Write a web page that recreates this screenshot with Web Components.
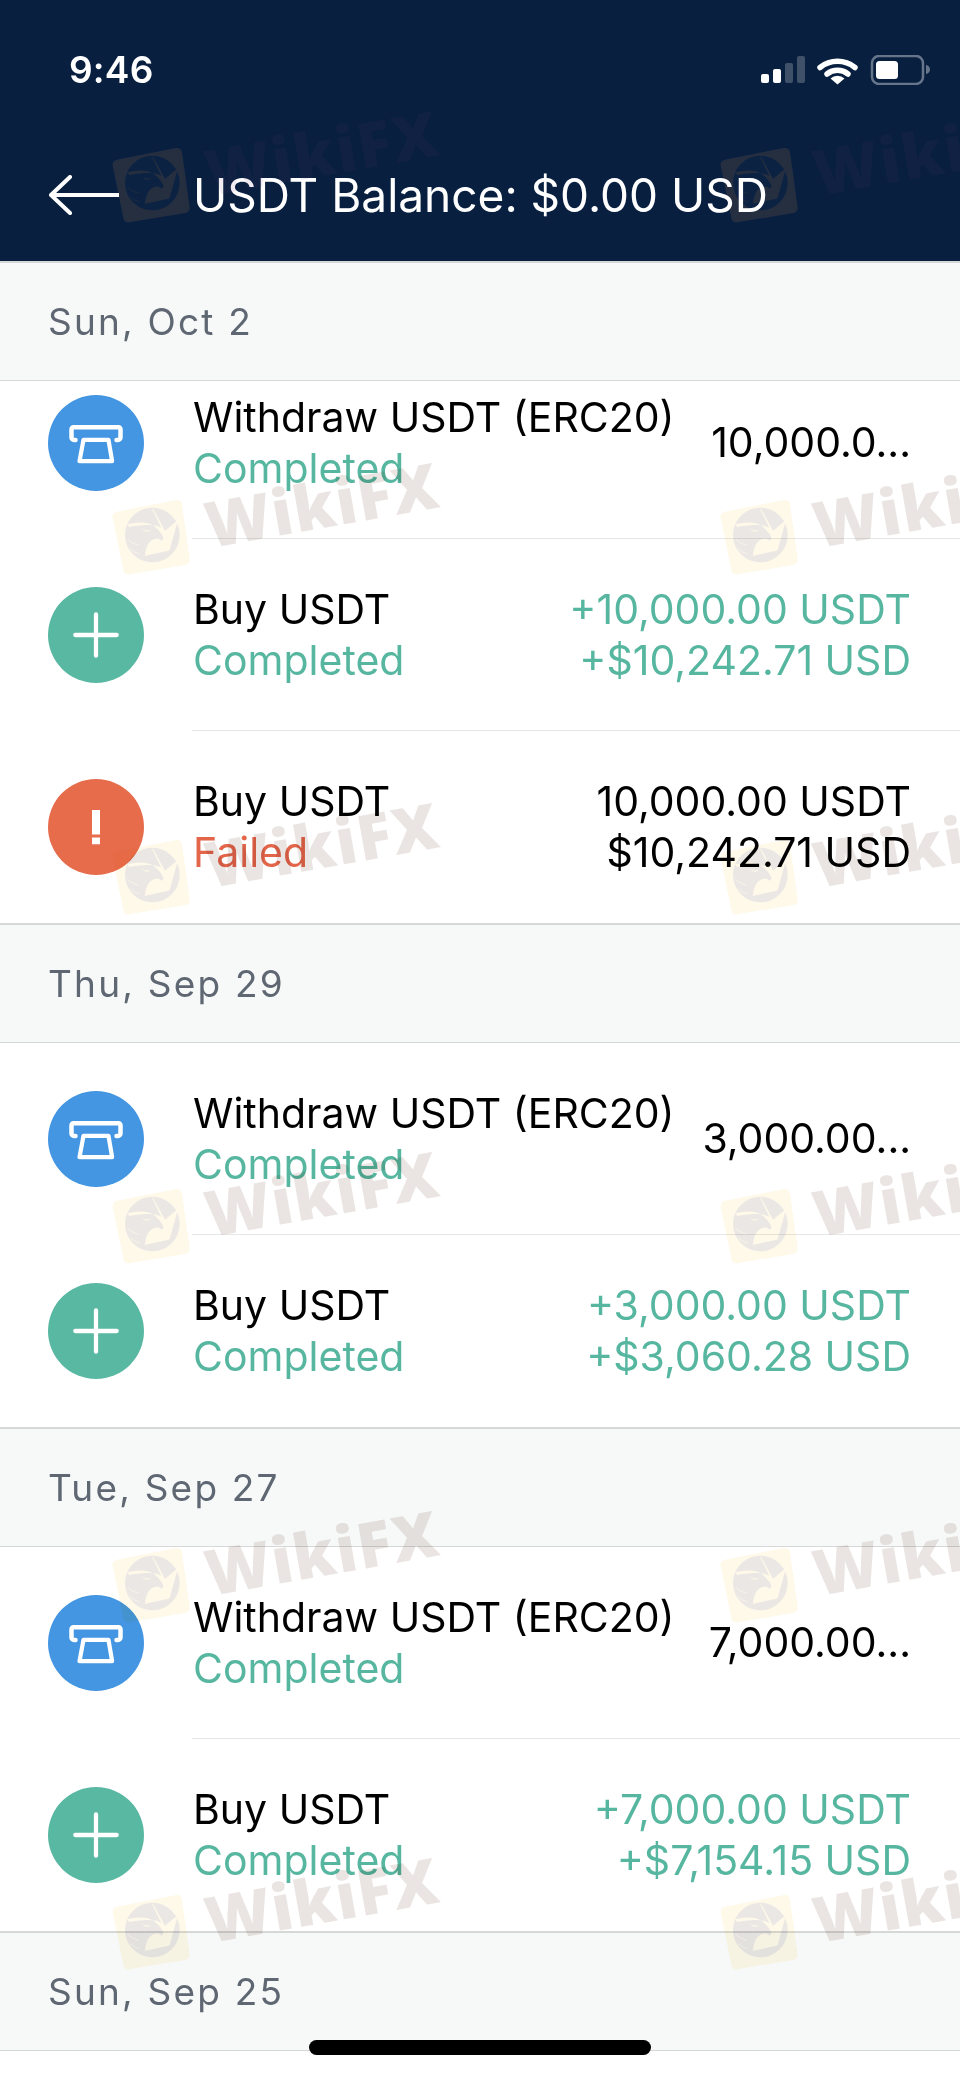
<!DOCTYPE html>
<html><head><meta charset="utf-8"><style>
html,body{margin:0;padding:0;background:#fff}
body{width:960px;height:2079px;overflow:hidden;font-family:Inter,"Liberation Sans",sans-serif}
</style></head><body>
<tx-app></tx-app>
<script>
const CIRCLE={
 withdraw:`<svg viewBox="0 0 96 96" width="96" height="96"><circle cx="48" cy="48" r="48" fill="#4496e2"/><path d="M27.500 45h-1.500a2.500 2.500 0 0 1-2.500-2.500V34.200a2 2 0 0 1 2-2h45a2 2 0 0 1 2 2v8.300a2.500 2.500 0 0 1-2.500 2.500h-1.500" fill="none" stroke="#fff" stroke-width="4.500" stroke-linecap="round" stroke-linejoin="round"/><path d="M35.500 44.800h25l3.600 21.400H31.500z" fill="none" stroke="#fff" stroke-width="4.200" stroke-linejoin="round"/></svg>`,
 plus:`<svg viewBox="0 0 96 96" width="96" height="96"><circle cx="48" cy="48" r="48" fill="#58b8a2"/><path d="M48 27.300v41.400M27.300 48h41.400" stroke="#fff" stroke-width="4.300" stroke-linecap="round"/></svg>`,
 fail:`<svg viewBox="0 0 96 96" width="96" height="96"><circle cx="48" cy="48" r="48" fill="#e66c4b"/><path d="M44 31h8v24.500h-8zM44 58.500h8v6.800h-8z" fill="#fff"/></svg>`
};
customElements.define('status-bar',class extends HTMLElement{constructor(){super();this.attachShadow({mode:'open'}).innerHTML=`<style>
:host{display:flex;justify-content:space-between;align-items:center;height:60px;padding:40px 29px 0 69px;color:#fff}
.t{font:600 37px/60px Inter,sans-serif;letter-spacing:.2px}
svg{display:block}
</style><span class="t">9:46</span>
<svg width="170" height="30" viewBox="762 55 170 30" fill="#fff">
<rect x="762" y="74" width="8" height="9" rx="2"/><rect x="774" y="69" width="8" height="14" rx="2"/>
<rect x="786" y="63" width="8" height="20" rx="2" fill="#3f5069"/><rect x="798" y="56" width="8" height="27" rx="2" fill="#3f5069"/>
<path d="M821 67.500a28 28 0 0 1 35 0" fill="none" stroke="#fff" stroke-width="5.500" stroke-linecap="round"/>
<path d="M828 74a17 17 0 0 1 21 0" fill="none" stroke="#fff" stroke-width="5.500" stroke-linecap="round"/>
<path d="M831.500 78.500a10 10 0 0 1 14 0L838.500 84.500z" fill="#fff"/>
<rect x="873" y="56" width="51" height="28" rx="7" fill="none" stroke="#66758a" stroke-width="2.500"/>
<rect x="877" y="61" width="22" height="18" rx="3.500"/>
<path d="M927 65a5 5 0 0 1 4 4.500 5 5 0 0 1-4 4.500z" fill="#66758a"/></svg>`}});

customElements.define('nav-bar',class extends HTMLElement{constructor(){super();this.attachShadow({mode:'open'}).innerHTML=`<style>
:host{display:block;height:261px;background:#081f40;box-sizing:border-box}
.row{display:flex;align-items:center;padding:63px 0 0 49px;height:64px}
.arrow{display:block;flex:none;margin-right:74px}
.title{font:400 46px/64px Inter,sans-serif;color:#fff;white-space:nowrap}
</style><status-bar></status-bar><div class="row"><svg class="arrow" width="70" height="40" viewBox="0 0 70 40"><path d="M21 2 2 20l19 18M2 20h68" fill="none" stroke="#fff" stroke-width="4" stroke-linecap="round" stroke-linejoin="round"/></svg><span class="title"><slot></slot></span></div>`}});

customElements.define('date-header',class extends HTMLElement{constructor(){super();this.attachShadow({mode:'open'}).innerHTML=`<style>
:host{display:flex;align-items:center;box-sizing:border-box;height:120px;padding:0 48px 1px;background:#f7f9f9;border-top:2px solid #d6d8d8;border-bottom:1px solid #d6d8d8;font:400 37px/1 Inter,sans-serif;letter-spacing:2.200px;color:#5f6773}
</style><slot></slot>`}});

customElements.define('tx-row',class extends HTMLElement{constructor(){super();const k=this.getAttribute('icon')||'plus';const c=this.getAttribute('amount')||'ink';this.attachShadow({mode:'open'}).innerHTML=`<style>
:host{display:flex;box-sizing:border-box;height:192px;padding-left:48px;align-items:stretch}
.ic{flex:none;width:96px;height:96px;align-self:center;margin-right:48px}
svg{display:block}
.b{flex:1;display:flex;justify-content:space-between;align-items:center;padding-right:49px;border-bottom:1px solid #e6e7e7;min-width:0}
:host([last]) .b{border-bottom:0}
.l,.r{font:400 41px/51px Inter,sans-serif;white-space:nowrap}
.l{color:#000;margin-left:1px}.r{text-align:right;display:flex;flex-direction:column}
.s{display:block;color:#56b69f}
:host([state=fail]) .s{color:#e3654a}
.r{color:${c==='green'?'#56b69f':'#000'}}
</style><span class="ic">${CIRCLE[k]}</span><div class="b"><div class="l"><slot name="title"></slot><span class="s"><slot name="status"></slot></span></div><div class="r"><slot name="amount"></slot></div></div>`}});

customElements.define('wiki-mark',class extends HTMLElement{constructor(){super();const dark=this.hasAttribute('dark');const blend=dark?'screen':'multiply';this.attachShadow({mode:'open'}).innerHTML=`<style>
:host{position:absolute;display:block;width:350px;height:110px;pointer-events:none}
svg{position:absolute;left:0;top:0;width:95px;height:95px;mix-blend-mode:${blend}}
.w{position:absolute;left:104px;top:-6px;font:800 63px/80px "Open Sans",Inter,sans-serif;letter-spacing:1.500px;color:${dark?'rgba(100,60,110,.1)':'#eae5e2'};${dark?'':'mix-blend-mode:multiply;'}transform:rotate(-10deg);transform-origin:0 60px;white-space:nowrap}
</style>
<svg viewBox="0 0 285 285">
<defs><mask id="m"><circle cx="142" cy="135" r="82" fill="#fff"/>
<path d="M66 103C92 98 122 92 146 108c14 10 26 24 30 38-4 3-6 5-8 6-3-5-8-7-15-6-18 2-30 18-33 50l-3 2 74-16 3-2 24-86-2-2-36 30-36-66-3 0 28 58c-14-10-40-12-96-3z" fill="#000"/>
<path d="M110 116q14 8 28 5-8 6-18 3z" fill="#000"/>
<path d="M68 148q14 14 34 18M76 176q10 12 28 16" stroke="#000" stroke-width="2" fill="none"/>
</mask></defs>
<path d="M36 68 214 33 a12 12 0 0 1 14 10L251 208a12 12 0 0 1-10 14L72 250a12 12 0 0 1-14-10L26 82a12 12 0 0 1 10-14z" fill="${dark?'#1e1200':'#fef9e9'}" stroke="${dark?'#1e1200':'#fef9e9'}" stroke-width="6" stroke-linejoin="round"/>
<rect x="40" y="30" width="205" height="205" fill="${dark?'#030303':'#ebe7e4'}" mask="url(#m)"/>
</svg>
<span class="w">WikiFX</span>`}});

customElements.define('tx-app',class extends HTMLElement{constructor(){super();
const row=(icon,t,st,stText,a1,a2,green,last)=>`<tx-row icon="${icon}" state="${st}" ${green?'amount="green"':''} ${last?'last':''}><span slot="title">${t}</span><span slot="status">${stText}</span><span slot="amount">${a1}</span>${a2?`<span slot="amount">${a2}</span>`:''}</tx-row>`;
const marks=[185,537,877,1226,1585,1932].map((y,i)=>[112,720].map(x=>`<wiki-mark ${i==0?'dark':''} style="left:${x-7}px;top:${y-47}px"></wiki-mark>`).join('')).join('');
this.attachShadow({mode:'open'}).innerHTML=`<style>
:host{display:block;position:relative;width:960px;height:2079px;overflow:hidden;background:#fff}
.crop{overflow:hidden;height:542px}.crop>div{margin-top:-34px}
.home{position:absolute;left:309px;top:2040px;width:342px;height:15px;border-radius:8px;background:#000}
</style>
<nav-bar>USDT Balance: $0.00 USD</nav-bar>
<date-header>Sun, Oct 2</date-header>
<div class="crop"><div>
${row('withdraw','Withdraw USDT (ERC20)','ok','Completed','10,000.0...')}
${row('plus','Buy USDT','ok','Completed','+10,000.00 USDT','+$10,242.71 USD',1)}
${row('fail','Buy USDT','fail','Failed','10,000.00 USDT','$10,242.71 USD',0,1)}
</div></div>
<date-header>Thu, Sep 29</date-header>
${row('withdraw','Withdraw USDT (ERC20)','ok','Completed','3,000.00...')}
${row('plus','Buy USDT','ok','Completed','+3,000.00 USDT','+$3,060.28 USD',1,1)}
<date-header>Tue, Sep 27</date-header>
${row('withdraw','Withdraw USDT (ERC20)','ok','Completed','7,000.00...')}
${row('plus','Buy USDT','ok','Completed','+7,000.00 USDT','+$7,154.15 USD',1,1)}
<date-header>Sun, Sep 25</date-header>
${marks}
<div class="home"></div>`}});
</script></body></html>
